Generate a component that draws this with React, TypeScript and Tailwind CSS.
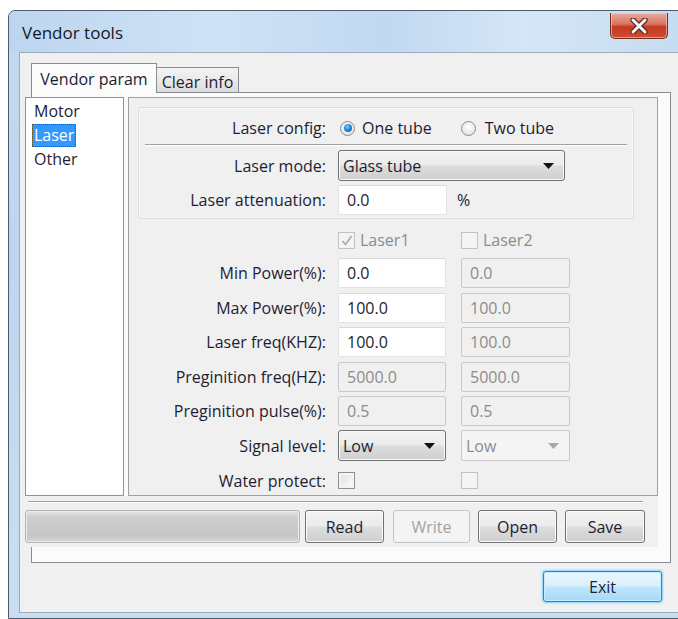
import React from "react";

const txt = "text-[#1d1d33]";

function Win7Button({
  children,
  disabled,
  className = "",
}: {
  children: React.ReactNode;
  disabled?: boolean;
  className?: string;
}) {
  if (disabled) {
    return (
      <div
        className={`flex items-center justify-center rounded-[3px] border border-[#c3c6c9] bg-[#f4f4f4] text-[#a3a3a3] ${className}`}
      >
        {children}
      </div>
    );
  }
  return (
    <div
      className={`flex items-center justify-center rounded-[3px] border border-[#707070] bg-[linear-gradient(180deg,#f3f3f3_0%,#ebebeb_48%,#dddddd_52%,#cfcfcf_100%)] shadow-[inset_0_0_0_1px_#fcfcfc] ${txt} ${className}`}
    >
      {children}
    </div>
  );
}

function TextBox({
  value,
  disabled,
  className = "",
}: {
  value: string;
  disabled?: boolean;
  className?: string;
}) {
  return disabled ? (
    <div
      className={`flex h-[30px] items-center rounded-[2px] border border-[#c9c9c9] bg-[#f0f0f0] pl-[8px] text-[#8c8c8c] ${className}`}
    >
      {value}
    </div>
  ) : (
    <div
      className={`flex h-[30px] items-center rounded-[2px] border border-[#e2e3e5] border-t-[#d9dadc] bg-white pl-[8px] ${txt} ${className}`}
    >
      {value}
    </div>
  );
}

function Arrow({ color }: { color: string }) {
  return (
    <svg width="11" height="6" viewBox="0 0 11 6">
      <path d="M0 0 H11 L5.5 6 Z" fill={color} />
    </svg>
  );
}

function Combo({
  value,
  disabled,
  className = "",
}: {
  value: string;
  disabled?: boolean;
  className?: string;
}) {
  if (disabled) {
    return (
      <div
        className={`flex h-[31px] items-center justify-between rounded-[2px] border border-[#c9c9c9] bg-[#f4f4f4] pl-[4px] pr-[10px] text-[#8c8c8c] ${className}`}
      >
        <span>{value}</span>
        <Arrow color="#a8a8a8" />
      </div>
    );
  }
  return (
    <div
      className={`flex h-[31px] items-center justify-between rounded-[3px] border border-[#707070] bg-[linear-gradient(180deg,#f3f3f3_0%,#ebebeb_48%,#dddddd_52%,#cfcfcf_100%)] pl-[4px] pr-[10px] shadow-[inset_0_0_0_1px_#fafafa] ${txt} ${className}`}
    >
      <span>{value}</span>
      <Arrow color="#111" />
    </div>
  );
}

function Radio({ checked }: { checked?: boolean }) {
  return (
    <div className="flex h-[15px] w-[15px] items-center justify-center rounded-full border border-[#8a8c8e] bg-[radial-gradient(circle_at_50%_40%,#ffffff_0%,#e6e6e6_70%,#cfcfcf_100%)]">
      {checked && (
        <div className="h-[8px] w-[8px] rounded-full bg-[radial-gradient(circle_at_40%_35%,#7fd0ff_0%,#2a8ad6_45%,#0b4a8c_100%)]" />
      )}
    </div>
  );
}

function CheckBox({
  checked,
  disabled,
}: {
  checked?: boolean;
  disabled?: boolean;
}) {
  return (
    <div
      className={`flex h-[17px] w-[17px] items-center justify-center border ${
        disabled
          ? "border-[#c2c2c2] bg-[#f4f4f4]"
          : "border-[#8e8f8f] bg-[linear-gradient(135deg,#dcdcdc_0%,#f2f2f2_60%,#ffffff_100%)] shadow-[inset_0_0_0_2px_#f4f4f4]"
      }`}
    >
      {checked && (
        <svg width="12" height="11" viewBox="0 0 12 11">
          <path
            d="M1.5 6 L4.5 9.5 L10.5 1"
            fill="none"
            stroke="#a9a9a9"
            strokeWidth="1.6"
          />
        </svg>
      )}
    </div>
  );
}

function CloseButton() {
  return (
    <div className="flex h-[26px] w-[58px] items-center justify-center rounded-b-[5px] border border-t-0 border-[#6e2c22] bg-[linear-gradient(180deg,#eca99c_0%,#d9735f_45%,#c43a22_55%,#d04c30_100%)] shadow-[inset_0_0_0_1px_rgba(255,210,200,0.6)]">
      <svg width="18" height="16" viewBox="0 0 18 16">
        <path
          d="M3 2 L15 14 M15 2 L3 14"
          stroke="#5a2a24"
          strokeWidth="5.4"
          strokeLinecap="round"
        />
        <path
          d="M3 2 L15 14 M15 2 L3 14"
          stroke="#f4f4f4"
          strokeWidth="3"
          strokeLinecap="round"
        />
      </svg>
    </div>
  );
}

function ParamRow({
  label,
  children,
}: {
  label: string;
  children: React.ReactNode;
}) {
  return (
    <div className="flex h-[30px] items-center">
      <div className={`w-[188px] whitespace-nowrap text-right ${txt}`}>{label}</div>
      <div className="ml-[12px] flex items-center">{children}</div>
    </div>
  );
}

function PairRow({
  label,
  a,
  b,
}: {
  label: string;
  a: React.ReactNode;
  b: React.ReactNode;
}) {
  return (
    <ParamRow label={label}>
      <div className="w-[108px]">{a}</div>
      <div className="ml-[15px] w-[109px]">{b}</div>
    </ParamRow>
  );
}

export default function App() {
  return (
    <div className="relative h-[619px] w-[678px] overflow-hidden bg-white font-['Open_Sans','Noto_Sans',sans-serif] text-[16px] leading-none">
      {/* Aero window frame */}
      <div className="ml-[8px] mt-[10px] flex h-[609px] w-[690px] flex-col rounded-t-[7px] border border-[#4d5b6b] bg-[linear-gradient(180deg,#c3daf1_0%,#bcd6f0_40%,#c9def3_100%)]">
        {/* Title bar */}
        <div className="flex h-[41px] items-start rounded-t-[6px] bg-[linear-gradient(90deg,#bcd6ef_0%,#cfe2f5_30%,#c1d9f1_55%,#d5e6f6_75%,#c4dbf1_100%)]">
          <div className="mt-[13px] pl-[13px] text-[17px] text-[#101828]">
            Vendor tools
          </div>
          <div className="ml-auto mr-[29px] mt-[2px]">
            <CloseButton />
          </div>
        </div>

        {/* Client area */}
        <div className="mb-[5px] ml-[10px] flex flex-1 flex-col border border-[#9aabbc] bg-[#f0f0f0] pl-[11px] pt-[10px]">
          {/* Tab headers */}
          <div className="relative z-10 -mb-px flex h-[30px] items-end">
            <div className={`flex h-[30px] w-[126px] items-center justify-center border border-b-0 border-[#898c95] bg-[#fbfbfb] ${txt}`}>
              Vendor param
            </div>
            <div className={`flex h-[26px] w-[82px] items-center justify-center border border-l-0 border-[#898c95] bg-[linear-gradient(180deg,#f4f4f4_0%,#e9e9e9_50%,#dcdcdc_100%)] pt-[3px] ${txt}`}>
              Clear info
            </div>
          </div>

          {/* Tab page */}
          <div className="h-[471px] w-[640px] border border-[#898c95] bg-[#fbfbfb]">
            <div className="-ml-[7px] w-[633px] pt-[4px]">
              <div className="flex h-[399px]">
                {/* Category list */}
                <div className={`w-[99px] border border-[#8f9296] bg-white pt-[1px] ${txt}`}>
                  <div className="flex h-[24px] items-center pl-[8px]">Motor</div>
                  <div className="flex h-[24px] items-center pl-[6px]">
                    <span className="flex h-[23px] items-center border border-dotted border-[#5b4a1c] bg-[#3399ff] px-[1px] text-white">
                      Laser
                    </span>
                  </div>
                  <div className="flex h-[24px] items-center pl-[8px]">Other</div>
                </div>

                {/* Laser parameter panel */}
                <div className="ml-[4px] w-[530px] border border-[#a0a0a0] bg-[#f0f0f0] pl-[9px] pt-[9px]">
                  {/* Tube configuration group */}
                  <div className="h-[112px] w-[496px] rounded-[3px] border border-[#d8dde2] shadow-[inset_0_0_0_1px_#f8f8f8]">
                    <div className="flex h-[36px] items-center pt-[4px]">
                      <div className={`w-[187px] text-right ${txt}`}>Laser config:</div>
                      <div className="ml-[14px] flex items-center">
                        <Radio checked />
                        <span className={`ml-[7px] ${txt}`}>One tube</span>
                      </div>
                      <div className="ml-[29px] flex items-center">
                        <Radio />
                        <span className={`ml-[9px] ${txt}`}>Two tube</span>
                      </div>
                    </div>
                    <div className="mx-[6px] border-t border-b border-t-[#a0a0a0] border-b-white" />
                    <div className="mt-[4px] flex h-[31px] items-center">
                      <div className={`w-[187px] text-right ${txt}`}>Laser mode:</div>
                      <Combo value="Glass tube" className="ml-[12px] w-[227px]" />
                    </div>
                    <div className="mt-[4px] flex h-[30px] items-center">
                      <div className={`w-[187px] whitespace-nowrap text-right ${txt}`}>Laser attenuation:</div>
                      <TextBox value="0.0" className="ml-[12px] w-[109px]" />
                      <span className={`ml-[10px] ${txt}`}>%</span>
                    </div>
                  </div>

                  {/* Per-tube columns */}
                  <div className="mt-[11px] flex h-[20px] items-center pl-[200px]">
                    <div className="flex w-[108px] items-center">
                      <CheckBox checked disabled />
                      <span className="ml-[5px] text-[#8c8c8c]">Laser1</span>
                    </div>
                    <div className="ml-[15px] flex items-center">
                      <CheckBox disabled />
                      <span className="ml-[5px] text-[#8c8c8c]">Laser2</span>
                    </div>
                  </div>

                  <div className="mt-[8px] flex flex-col gap-[4.6px]">
                    <PairRow
                      label="Min Power(%):"
                      a={<TextBox value="0.0" />}
                      b={<TextBox value="0.0" disabled />}
                    />
                    <PairRow
                      label="Max Power(%):"
                      a={<TextBox value="100.0" />}
                      b={<TextBox value="100.0" disabled />}
                    />
                    <PairRow
                      label="Laser freq(KHZ):"
                      a={<TextBox value="100.0" />}
                      b={<TextBox value="100.0" disabled />}
                    />
                    <PairRow
                      label="Preginition freq(HZ):"
                      a={<TextBox value="5000.0" disabled />}
                      b={<TextBox value="5000.0" disabled />}
                    />
                    <PairRow
                      label="Preginition pulse(%):"
                      a={<TextBox value="0.5" disabled />}
                      b={<TextBox value="0.5" disabled />}
                    />
                    <PairRow
                      label="Signal level:"
                      a={<Combo value="Low" />}
                      b={<Combo value="Low" disabled />}
                    />
                    <PairRow
                      label="Water protect:"
                      a={<CheckBox />}
                      b={<CheckBox disabled />}
                    />
                  </div>
                </div>
              </div>

              {/* Action bar */}
              <div className="h-[51px] bg-[#f0f0f0] pt-[5px]">
                <div className="ml-[3px] w-[615px] border-t border-b border-t-[#a0a0a0] border-b-white" />
                <div className="mt-[7px] flex h-[33px] items-stretch">
                  <div className="w-[275px] rounded-[3px] border border-[#b4b4b4] bg-[linear-gradient(180deg,#e6e6e6_0%,#cfcfcf_20%,#c6c6c6_80%,#d6d6d6_100%)] shadow-[inset_0_0_0_1px_#ececec]" />
                  <Win7Button className="ml-[5px] w-[79px]">Read</Win7Button>
                  <Win7Button disabled className="ml-[9px] w-[77px]">
                    Write
                  </Win7Button>
                  <Win7Button className="ml-[8px] w-[79px]">Open</Win7Button>
                  <Win7Button className="ml-[8px] w-[80px]">Save</Win7Button>
                </div>
              </div>
            </div>
          </div>

          {/* Dialog buttons */}
          <div className="mt-[8px] flex w-[631px] justify-end">
            <div className={`flex h-[31px] w-[119px] items-center justify-center rounded-[3px] border border-[#3c7fb1] bg-[linear-gradient(180deg,#eaf6fd_0%,#d9f0fc_48%,#bee6fd_52%,#a7d9f5_100%)] shadow-[0_0_2px_1px_#7fd0ff,inset_0_0_0_1px_#c7ecff] ${txt}`}>
              Exit
            </div>
          </div>
        </div>
      </div>
    </div>
  );
}
